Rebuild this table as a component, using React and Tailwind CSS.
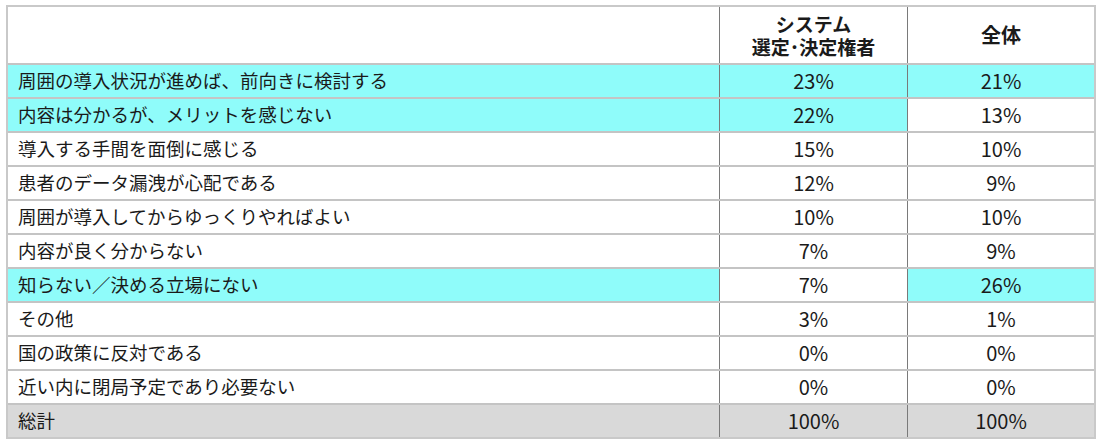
import React from "react";

const rows = [
  { label: "周囲の導入状況が進めば、前向きに検討する", a: "23%", b: "21%", hl: [true, true, true] },
  { label: "内容は分かるが、メリットを感じない", a: "22%", b: "13%", hl: [true, true, false] },
  { label: "導入する手間を面倒に感じる", a: "15%", b: "10%", hl: [false, false, false] },
  { label: "患者のデータ漏洩が心配である", a: "12%", b: "9%", hl: [false, false, false] },
  { label: "周囲が導入してからゆっくりやればよい", a: "10%", b: "10%", hl: [false, false, false] },
  { label: "内容が良く分からない", a: "7%", b: "9%", hl: [false, false, false] },
  { label: "知らない／決める立場にない", a: "7%", b: "26%", hl: [true, false, true] },
  { label: "その他", a: "3%", b: "1%", hl: [false, false, false] },
  { label: "国の政策に反対である", a: "0%", b: "0%", hl: [false, false, false] },
  { label: "近い内に閉局予定であり必要ない", a: "0%", b: "0%", hl: [false, false, false] },
];

const bg = (on) => (on ? "bg-[#8ffcfa]" : "bg-white");

export default function App() {
  return (
    <div
      className="w-[1104px] h-[447px] bg-white pl-[6px] pt-[5px] text-[#1a1a1a]"
      style={{ fontFamily: '"Noto Sans CJK JP", "Noto Sans", sans-serif' }}
    >
      <div className="w-[1090px] border-2 border-[#c9c9c9]">
        <div className="grid grid-cols-[711px_188px_187px] h-[58px] border-b-2 border-[#c4c4c4]">
          <div className="bg-white" />
          <div className="border-l border-[#7a7a7a] flex flex-col items-center justify-center font-bold text-[19px] leading-[23px]">
            <span>システム</span>
            <span>選定･決定権者</span>
          </div>
          <div className="border-l border-[#7a7a7a] flex items-center justify-center font-bold text-[20px]">
            全体
          </div>
        </div>
        {rows.map((r) => (
          <div
            key={r.label}
            className="grid grid-cols-[711px_188px_187px] h-[34px] border-b-2 border-[#c4c4c4] text-[18.5px]"
          >
            <div className={`${bg(r.hl[0])} flex items-center pl-[10px]`}>{r.label}</div>
            <div className={`${bg(r.hl[1])} border-l border-[#7a7a7a] flex items-center justify-center text-[20px]`}>{r.a}</div>
            <div className={`${bg(r.hl[2])} border-l border-[#7a7a7a] flex items-center justify-center text-[20px]`}>{r.b}</div>
          </div>
        ))}
        <div className="grid grid-cols-[711px_188px_187px] h-[32px] bg-[#d9d9d9] text-[18.5px]">
          <div className="flex items-center pl-[10px]">総計</div>
          <div className="border-l border-[#7a7a7a] flex items-center justify-center text-[20px]">100%</div>
          <div className="border-l border-[#7a7a7a] flex items-center justify-center text-[20px]">100%</div>
        </div>
      </div>
    </div>
  );
}
